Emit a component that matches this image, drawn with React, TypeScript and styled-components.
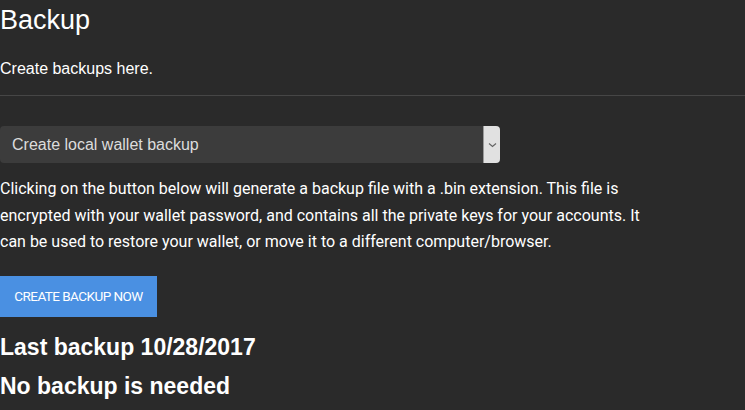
import * as React from 'react'
import styled, { createGlobalStyle } from 'styled-components'

const GlobalStyle = createGlobalStyle`
  html, body {
    margin: 0;
    padding: 0;
    background: #2a2a2a;
    color: #ffffff;
    font-family: 'Liberation Sans', Arial, sans-serif;
  }
`

const SPage = styled.div`
  width: 745px;
  height: 410px;
  overflow: hidden;
  background: #2a2a2a;
`

const STitle = styled.h1`
  margin: 0;
  padding-top: 5px;
  font-size: 27px;
  font-weight: 400;
  line-height: 30px;
`

const SSubtitle = styled.p`
  margin: 24px 0 0;
  font-size: 16px;
  line-height: 20px;
`

const SDivider = styled.hr`
  margin: 16px 0 0;
  border: 0;
  border-top: 1px solid #464646;
`

const SSelectWrap = styled.div`
  margin-top: 30px;
  width: 500px;
  height: 37px;
  display: flex;
  border-radius: 4px;
  overflow: hidden;
  background: #3c3c3c;
`

const SSelectValue = styled.div`
  flex: 1;
  display: flex;
  align-items: center;
  padding-left: 12px;
  font-size: 16px;
  color: #dcdcdc;
`

const SSelectArrow = styled.div`
  width: 16px;
  display: flex;
  align-items: center;
  justify-content: center;
  background: #e1e1e1;
  border-left: 1px solid #9a9a9a;
`

const SText = styled.p`
  margin: 13px 0 0;
  width: 650px;
  font-family: Roboto, 'Liberation Sans', sans-serif;
  font-size: 16px;
  line-height: 26.5px;
`

const SButton = styled.button`
  margin-top: 20px;
  width: 157px;
  height: 41px;
  border: 0;
  background: #4a90e2;
  color: #ffffff;
  font-family: Roboto, sans-serif;
  font-size: 13.5px;
  letter-spacing: -0.55px;
  text-transform: uppercase;
  padding: 0;
`

const SStatus = styled.h3`
  margin: 0;
  font-size: 23px;
  font-weight: 700;
  line-height: 39px;
`

const SStatusFirst = styled(SStatus)`
  margin-top: 11px;
`

const App = () => {
  return (
    <SPage>
      <GlobalStyle />
      <STitle>Backup</STitle>
      <SSubtitle>Create backups here.</SSubtitle>
      <SDivider />
      <SSelectWrap>
        <SSelectValue>Create local wallet backup</SSelectValue>
        <SSelectArrow>
          <svg width="9" height="6" viewBox="0 0 9 6">
            <path d="M1 1.5 L4.5 4.5 L8 1.5" fill="none" stroke="#666" strokeWidth="1.2" />
          </svg>
        </SSelectArrow>
      </SSelectWrap>
      <SText>
        Clicking on the button below will generate a backup file with a .bin extension. This file is
        encrypted with your wallet password, and contains all the private keys for your accounts. It
        can be used to restore your wallet, or move it to a different computer/browser.
      </SText>
      <SButton>Create backup now</SButton>
      <SStatusFirst>Last backup 10/28/2017</SStatusFirst>
      <SStatus>No backup is needed</SStatus>
    </SPage>
  )
}

export default App
